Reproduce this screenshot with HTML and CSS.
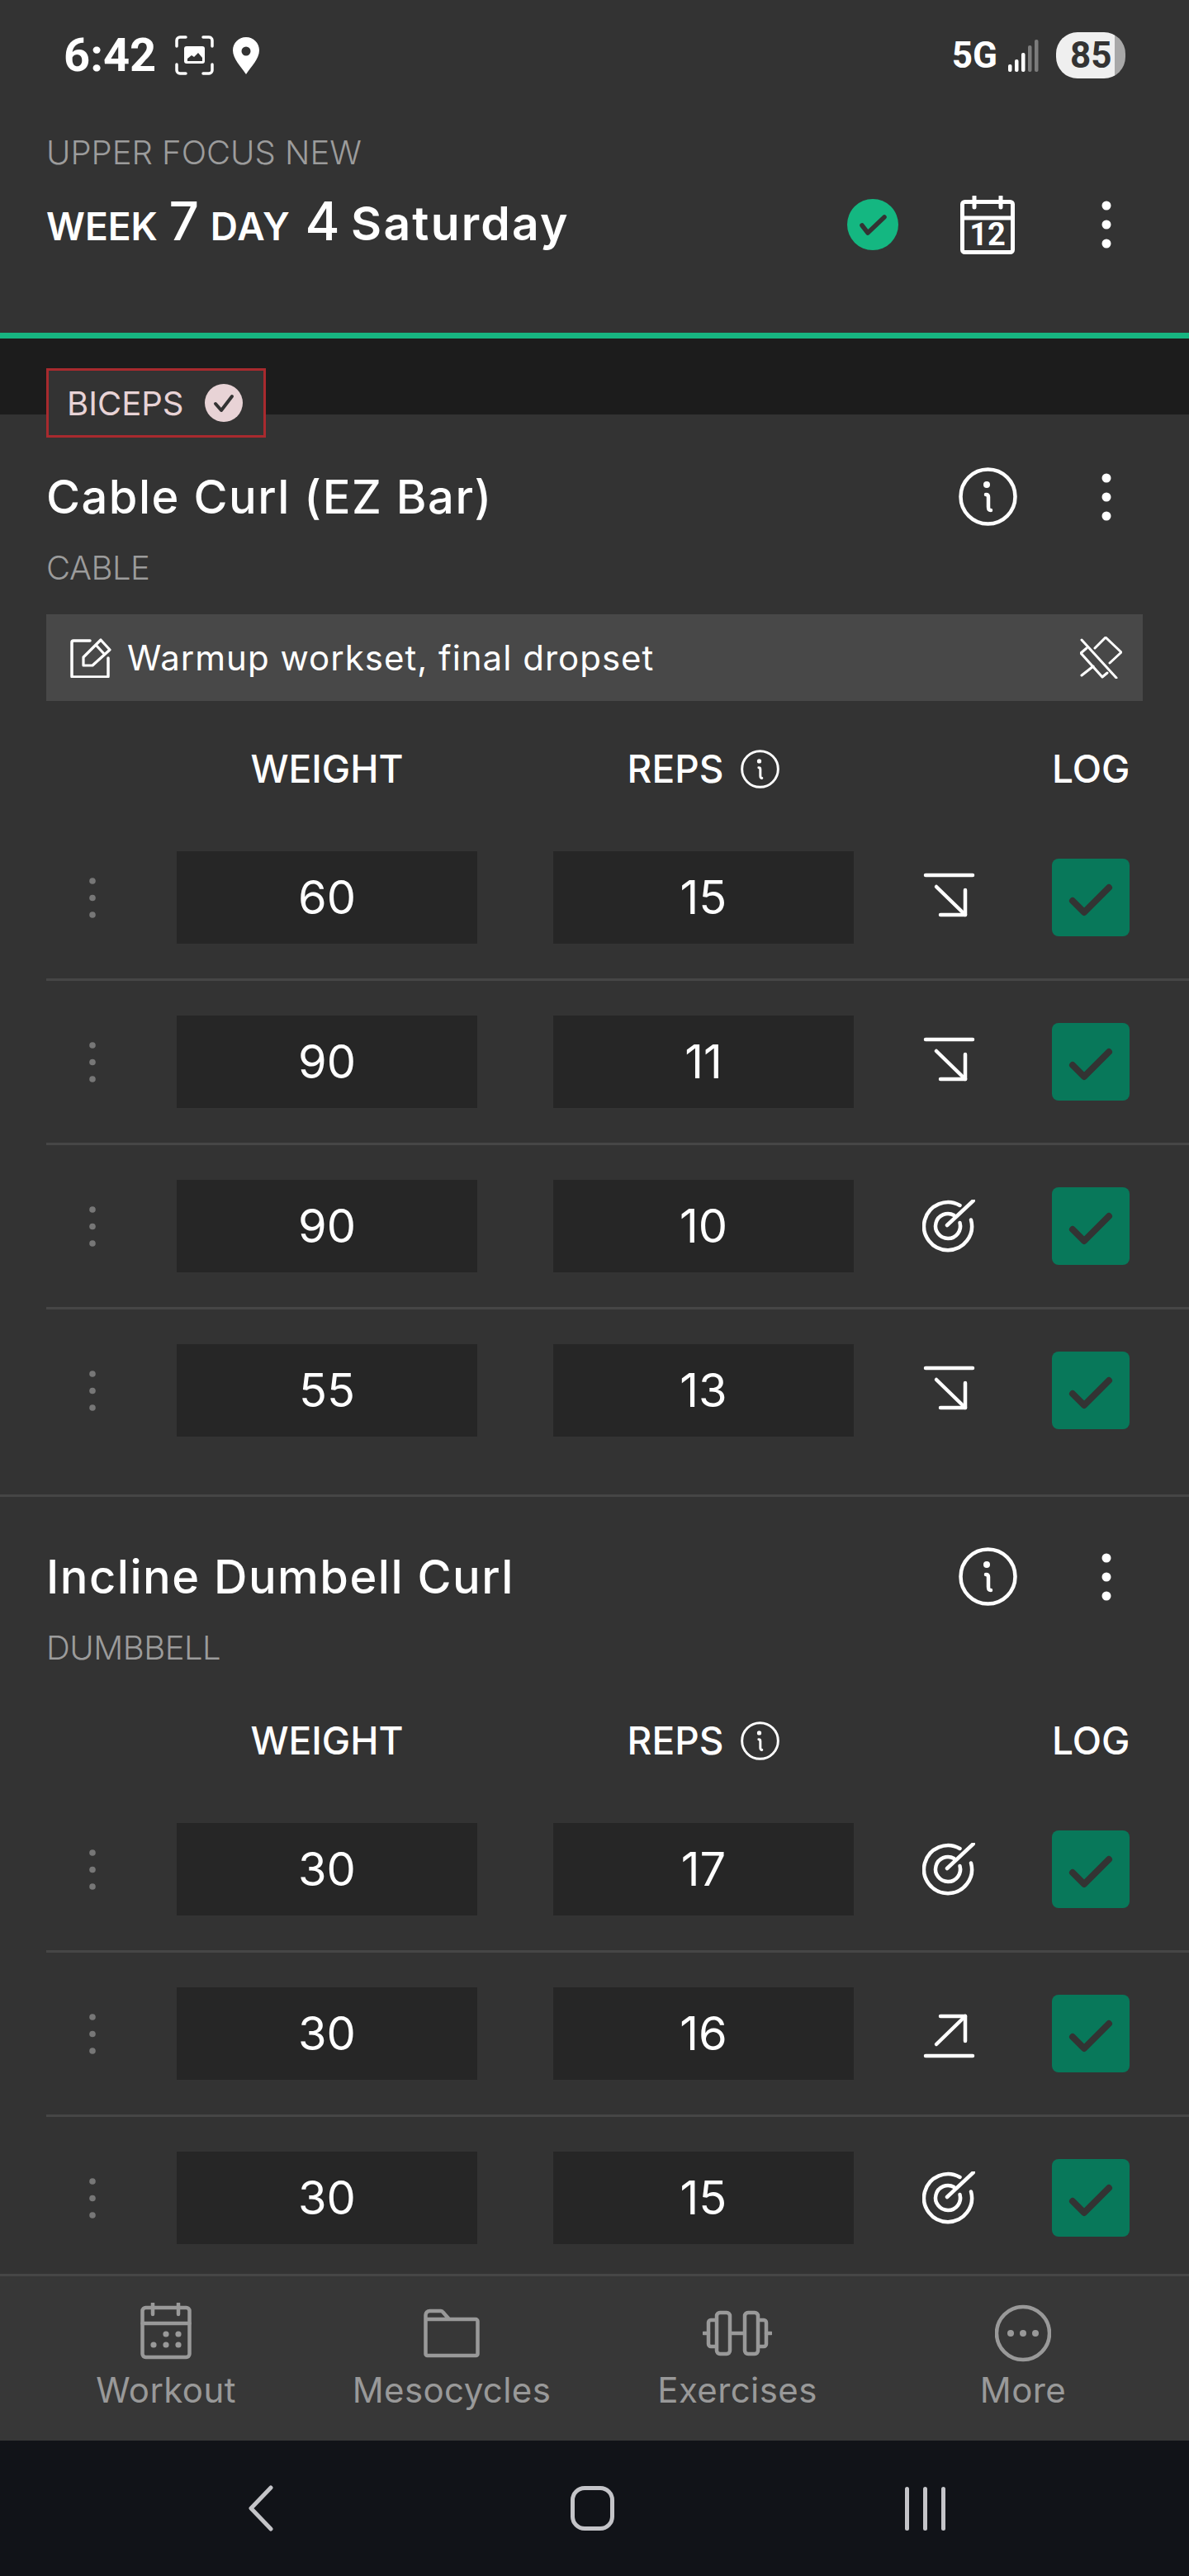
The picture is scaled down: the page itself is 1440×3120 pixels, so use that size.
FILE: index.html
```html
<!DOCTYPE html>
<html>
<head>
	<title>Workout</title>
	<link rel="stylesheet" href="styles.css">
</head>
<body>
	<svg class="defs" width="0" height="0">
		<symbol id="i-info" viewBox="0 0 71 71">
			<circle cx="35.5" cy="35.5" r="33" fill="none" stroke="currentColor" stroke-width="4.5"/>
			<circle cx="34" cy="21" r="4" fill="currentColor"/>
			<path d="M33 33c2 0 3 1 3 3v12c0 3 1 4 3 4" fill="none" stroke="currentColor" stroke-width="4.5" stroke-linecap="round"/>
		</symbol>
		<symbol id="i-kebab" viewBox="0 0 12 58">
			<circle cx="6" cy="6" r="5.5" fill="currentColor"/>
			<circle cx="6" cy="29" r="5.5" fill="currentColor"/>
			<circle cx="6" cy="52" r="5.5" fill="currentColor"/>
		</symbol>
		<symbol id="i-drag" viewBox="0 0 8 49">
			<circle cx="4" cy="4" r="3.8" fill="currentColor"/>
			<circle cx="4" cy="24.5" r="3.8" fill="currentColor"/>
			<circle cx="4" cy="45" r="3.8" fill="currentColor"/>
		</symbol>
		<symbol id="i-target" viewBox="0 0 64 64">
			<g fill="none" stroke="currentColor" stroke-width="4.5" stroke-linecap="round">
				<path d="M45.5 7A29 29 0 1 0 59 24.5"/>
				<path d="M38.5 19A15 15 0 1 0 45.5 28"/>
				<path d="M30 31L62 1"/>
			</g>
		</symbol>
		<symbol id="i-down" viewBox="0 0 64 64">
			<g fill="none" stroke="currentColor" stroke-width="4.5" stroke-linecap="round" stroke-linejoin="round">
				<path d="M4 5H61"/>
				<path d="M17 19L52 53"/>
				<path d="M52 23V53H22"/>
			</g>
		</symbol>
		<symbol id="i-up" viewBox="0 0 64 64">
			<g fill="none" stroke="currentColor" stroke-width="4.5" stroke-linecap="round" stroke-linejoin="round">
				<path d="M4 59H61"/>
				<path d="M17 45L52 11"/>
				<path d="M22 11H52V41"/>
			</g>
		</symbol>
		<symbol id="i-check" viewBox="0 0 94 94">
			<path d="M25 51L39 65L69 35" fill="none" stroke="#333" stroke-width="8" stroke-linecap="round" stroke-linejoin="round"/>
		</symbol>
	</svg>

	<div class="phone">
		<header class="top">
			<div class="status">
				<span class="clock">6:42</span>
				<svg class="ic-shot" viewBox="0 0 47 48">
					<path d="M2 13V6a4 4 0 0 1 4-4h7M34 2h7a4 4 0 0 1 4 4v7M45 35v7a4 4 0 0 1-4 4h-7M13 46H6a4 4 0 0 1-4-4v-7" fill="none" stroke="#fff" stroke-width="3.5" stroke-linecap="round"/>
					<rect x="11" y="13" width="25" height="21" rx="3" fill="#fff"/>
					<path d="M15 31v-3l5-4 3 2 5-5 5 6v4z" fill="#333"/>
				</svg>
				<svg class="ic-loc" viewBox="0 0 32 45">
					<path d="M16 0C7 0 0 7 0 16c0 10 10 20 16 29 6-9 16-19 16-29C32 7 25 0 16 0z" fill="#fff"/>
					<circle cx="16" cy="17" r="5.5" fill="#333"/>
				</svg>
				<span class="status-gap"></span>
				<span class="net">5G</span>
				<svg class="ic-signal" viewBox="0 0 37 39">
					<rect x="0" y="30" width="4.5" height="9" rx="2" fill="#fff"/>
					<rect x="8" y="24" width="4.5" height="15" rx="2" fill="#fff"/>
					<rect x="16" y="16" width="4.5" height="23" rx="2" fill="#fff"/>
					<rect x="24" y="7" width="4.5" height="32" rx="2" fill="#7c7c7c"/>
					<rect x="32" y="0" width="4.5" height="39" rx="2" fill="#7c7c7c"/>
				</svg>
				<span class="battery">85</span>
			</div>
			<div class="plan">UPPER FOCUS NEW</div>
			<div class="day-row">
				<h1 class="day"><small>WEEK</small> <b>7</b> <small class="day-label">DAY</small> <b>4</b> <span class="dow">Saturday</span></h1>
				<svg class="ic-done" viewBox="0 0 62 62">
					<circle cx="31" cy="31" r="31" fill="#14b781"/>
					<path d="M18 32L25 41L45 22" fill="none" stroke="#333" stroke-width="5.5" stroke-linecap="round" stroke-linejoin="round"/>
				</svg>
				<svg class="ic-cal" viewBox="0 0 66 71">
					<rect x="2.5" y="7.5" width="61" height="61" rx="3" fill="none" stroke="#fff" stroke-width="5"/>
					<path d="M2.5 27H63.5M17 1V14M49 1V14" stroke="#fff" stroke-width="5" stroke-linecap="round"/>
					<text class="cal-num" x="33" y="60" text-anchor="middle">12</text>
				</svg>
				<svg class="ic-kebab"><use href="#i-kebab"/></svg>
			</div>
		</header>
		<div class="progress"></div>

		<main class="scroll">
			<div class="band">
				<div class="chip">
					<span>BICEPS</span>
					<svg class="ic-chip" viewBox="0 0 46 46">
						<circle cx="23" cy="23" r="23" fill="#e8d3d6"/>
						<path d="M13 24L20 32L33 15" fill="none" stroke="#333" stroke-width="4" stroke-linecap="round" stroke-linejoin="round"/>
					</svg>
				</div>
			</div>

			<section class="exercise first">
				<div class="ex-head">
					<h2>Cable Curl (EZ Bar)</h2>
					<svg class="ic-info"><use href="#i-info"/></svg>
					<svg class="ic-kebab"><use href="#i-kebab"/></svg>
				</div>
				<div class="ex-kind">CABLE</div>
				<div class="note">
					<svg class="ic-edit" viewBox="0 0 50 48">
						<path d="M24 3H4a2 2 0 0 0-2 2v41a1 1 0 0 0 1 1h42a1 1 0 0 0 1-1V24" fill="none" stroke="#fff" stroke-width="3.5" stroke-linecap="round"/>
						<path d="M16 33V23L37 2l11 12-21 19zM31 8l11 12" fill="none" stroke="#fff" stroke-width="3.2" stroke-linejoin="round"/>
					</svg>
					<span class="note-text">Warmup workset, final dropset</span>
					<svg class="ic-pin" viewBox="0 0 51 51">
						<g fill="none" stroke="#fff" stroke-width="3" stroke-linecap="round" stroke-linejoin="round">
							<path d="M2 4L44 50"/>
							<path d="M18 14L31 1L50 19L36 32"/>
							<path d="M8 14L1 20L27 49L33 44"/>
							<path d="M16 36L2 47"/>
						</g>
					</svg>
				</div>
				<div class="sets-head">
					<span class="c-weight">WEIGHT</span>
					<span class="c-reps">REPS <svg class="ic-info-sm"><use href="#i-info"/></svg></span>
					<span class="c-log">LOG</span>
				</div>
				<div class="set">
					<svg class="ic-drag"><use href="#i-drag"/></svg>
					<div class="val c-weight">60</div>
					<div class="val c-reps">15</div>
					<svg class="ic-trend"><use href="#i-down"/></svg>
					<svg class="ic-log"><use href="#i-check"/></svg>
				</div>
				<div class="set">
					<svg class="ic-drag"><use href="#i-drag"/></svg>
					<div class="val c-weight">90</div>
					<div class="val c-reps">11</div>
					<svg class="ic-trend"><use href="#i-down"/></svg>
					<svg class="ic-log"><use href="#i-check"/></svg>
				</div>
				<div class="set">
					<svg class="ic-drag"><use href="#i-drag"/></svg>
					<div class="val c-weight">90</div>
					<div class="val c-reps">10</div>
					<svg class="ic-trend"><use href="#i-target"/></svg>
					<svg class="ic-log"><use href="#i-check"/></svg>
				</div>
				<div class="set last">
					<svg class="ic-drag"><use href="#i-drag"/></svg>
					<div class="val c-weight">55</div>
					<div class="val c-reps">13</div>
					<svg class="ic-trend"><use href="#i-down"/></svg>
					<svg class="ic-log"><use href="#i-check"/></svg>
				</div>
			</section>

			<section class="exercise">
				<div class="ex-head">
					<h2>Incline Dumbell Curl</h2>
					<svg class="ic-info"><use href="#i-info"/></svg>
					<svg class="ic-kebab"><use href="#i-kebab"/></svg>
				</div>
				<div class="ex-kind">DUMBBELL</div>
				<div class="sets-head no-note">
					<span class="c-weight">WEIGHT</span>
					<span class="c-reps">REPS <svg class="ic-info-sm"><use href="#i-info"/></svg></span>
					<span class="c-log">LOG</span>
				</div>
				<div class="set">
					<svg class="ic-drag"><use href="#i-drag"/></svg>
					<div class="val c-weight">30</div>
					<div class="val c-reps">17</div>
					<svg class="ic-trend"><use href="#i-target"/></svg>
					<svg class="ic-log"><use href="#i-check"/></svg>
				</div>
				<div class="set">
					<svg class="ic-drag"><use href="#i-drag"/></svg>
					<div class="val c-weight">30</div>
					<div class="val c-reps">16</div>
					<svg class="ic-trend"><use href="#i-up"/></svg>
					<svg class="ic-log"><use href="#i-check"/></svg>
				</div>
				<div class="set">
					<svg class="ic-drag"><use href="#i-drag"/></svg>
					<div class="val c-weight">30</div>
					<div class="val c-reps">15</div>
					<svg class="ic-trend"><use href="#i-target"/></svg>
					<svg class="ic-log"><use href="#i-check"/></svg>
				</div>
			</section>
		</main>

		<nav class="tabs">
			<a class="tab">
				<svg class="tab-ic" viewBox="0 0 62 72">
					<rect x="2.5" y="6" width="57" height="60" rx="4" fill="none" stroke="currentColor" stroke-width="4.5"/>
					<path d="M2.5 25H59.5M15 1V14M46 1V14" stroke="currentColor" stroke-width="4.5" stroke-linecap="round"/>
					<g fill="currentColor">
						<circle cx="31" cy="38" r="3.6"/><circle cx="46" cy="38" r="3.6"/>
						<circle cx="16" cy="51" r="3.6"/><circle cx="31" cy="51" r="3.6"/><circle cx="46" cy="51" r="3.6"/>
					</g>
				</svg>
				<span>Workout</span>
			</a>
			<a class="tab">
				<svg class="tab-ic" viewBox="0 -8 68 72">
					<path d="M2.5 7a5 5 0 0 1 5-5H21a3 3 0 0 1 2.5 1.5L31 12H63a2.5 2.5 0 0 1 2.5 2.5V54a2 2 0 0 1-2 2H4.5a2 2 0 0 1-2-2zM2.5 12H31" fill="none" stroke="currentColor" stroke-width="4.5" stroke-linejoin="round"/>
				</svg>
				<span>Mesocycles</span>
			</a>
			<a class="tab">
				<svg class="tab-ic" viewBox="0 -3 84 72">
					<g fill="none" stroke="currentColor" stroke-width="4.5" stroke-linejoin="round">
						<rect x="17" y="9" width="16" height="50" rx="4"/>
						<rect x="51" y="9" width="16" height="50" rx="4"/>
						<path d="M17 18H10a3 3 0 0 0-3 3V47a3 3 0 0 0 3 3h7M67 18h7a3 3 0 0 1 3 3V47a3 3 0 0 1-3 3h-7M33 34H51"/>
						<path d="M1 34H7M77 34H83" stroke-linecap="round"/>
					</g>
				</svg>
				<span>Exercises</span>
			</a>
			<a class="tab">
				<svg class="tab-ic" viewBox="0 -3 68 72">
					<circle cx="34" cy="34" r="32" fill="none" stroke="currentColor" stroke-width="4.5"/>
					<circle cx="19" cy="34" r="4" fill="currentColor"/>
					<circle cx="34" cy="34" r="4" fill="currentColor"/>
					<circle cx="49" cy="34" r="4" fill="currentColor"/>
				</svg>
				<span>More</span>
			</a>
		</nav>

		<div class="sysbar">
			<svg class="sys-back" viewBox="0 0 30 56"><path d="M27 3L3 28L27 53" fill="none" stroke="#c4c4c8" stroke-width="5" stroke-linecap="round" stroke-linejoin="round"/></svg>
			<div class="sys-home"></div>
			<div class="sys-recent"><i></i><i></i><i></i></div>
		</div>
	</div>
</body>
</html>
```

FILE: styles.css
```css
* {
	box-sizing: border-box;
}
body {
	margin: 0;
	background: #333;
}
.defs {
	position: absolute;
}
.phone {
	display: flex;
	flex-direction: column;
	width: 1440px;
	height: 3120px;
	overflow: hidden;
	background: #333;
	color: #fff;
	font-family: Inter, "Noto Sans", sans-serif;
}

/* top bar */
.top {
	height: 403px;
	padding: 39px 0 0 56px;
}
.status {
	display: flex;
	align-items: center;
	height: 56px;
	padding: 0 77px 0 21px;
}
.clock {
	font-family: Roboto, sans-serif;
	font-size: 56px;
	font-weight: 700;
	width: 135px;
}
.ic-shot {
	width: 47px;
	height: 48px;
}
.ic-loc {
	width: 32px;
	height: 45px;
	margin-left: 23px;
}
.status-gap {
	flex: 1;
}
.net {
	font-family: Roboto, sans-serif;
	font-size: 44px;
	font-weight: 700;
}
.ic-signal {
	width: 37px;
	height: 39px;
	margin-left: 13px;
}
.battery {
	width: 84px;
	height: 56px;
	margin-left: 21px;
	padding-left: 17px;
	border-radius: 26px;
	background: linear-gradient(90deg, #efefef 85%, #a8a8a8 85%);
	color: #333;
	font-family: Roboto, sans-serif;
	font-size: 44px;
	font-weight: 700;
	line-height: 56px;
}
.plan {
	margin-top: 65px;
	color: #9c9c9c;
	font-size: 40px;
	font-weight: 300;
	line-height: 50px;
}
.day-row {
	display: flex;
	align-items: center;
	height: 72px;
	margin-top: 26px;
	padding-right: 94px;
}
.day {
	flex: 1;
	margin: 0;
	padding-bottom: 10px;
	font-size: 54px;
	font-weight: 600;
	white-space: nowrap;
}
.day small {
	font-size: 46px;
}
.day .day-label {
	margin-right: 4px;
	letter-spacing: 1px;
}
.day b {
	font-size: 64px;
	font-weight: 500;
}
.dow {
	font-size: 57px;
	letter-spacing: 2.2px;
}
.ic-done {
	width: 62px;
	height: 62px;
	margin-right: 75px;
}
.ic-cal {
	width: 66px;
	height: 71px;
	margin-right: 105px;
}
.cal-num {
	fill: #fff;
	font-family: Roboto, sans-serif;
	font-size: 38px;
	font-weight: 700;
}
.ic-kebab {
	width: 12px;
	height: 58px;
}
.progress {
	height: 7px;
	background: #17b581;
}

/* scrolling list */
.scroll {
	flex: 1;
	overflow: hidden;
}
.band {
	height: 92px;
	padding: 36px 0 0 56px;
	background: #1c1c1c;
}
.chip {
	display: flex;
	align-items: center;
	justify-content: space-between;
	width: 266px;
	height: 84px;
	padding: 0 25px 0 22px;
	border: 3px solid #a82a2e;
	background: #333;
	color: #e8d3d6;
	font-size: 40px;
}
.ic-chip {
	width: 46px;
	height: 46px;
}
.exercise {
	padding: 61px 0 0 56px;
	border-top: 3px solid #464646;
	margin-top: 28px;
}
.exercise.first {
	padding-top: 64px;
	border-top: 0;
	margin-top: 0;
}
.ex-head {
	display: flex;
	align-items: center;
	height: 71px;
	padding-right: 94px;
}
.ex-head h2 {
	flex: 1;
	margin: 0;
	font-size: 56px;
	font-weight: 500;
	letter-spacing: 1.5px;
}
.ic-info {
	width: 71px;
	height: 71px;
	margin-right: 102px;
}
.ex-kind {
	margin-top: 26px;
	color: #9c9c9c;
	font-size: 40px;
	font-weight: 300;
	letter-spacing: -0.5px;
	line-height: 50px;
}
.note {
	display: flex;
	align-items: center;
	width: 1328px;
	height: 105px;
	margin-top: 31px;
	padding: 0 25px 0 29px;
	background: #484848;
}
.ic-edit {
	width: 50px;
	height: 48px;
}
.note-text {
	flex: 1;
	margin-left: 19px;
	font-size: 42px;
	letter-spacing: 1px;
}
.ic-pin {
	width: 51px;
	height: 51px;
}

/* sets table */
.sets-head {
	display: grid;
	grid-template-columns: 158px 364px 92px 364px 240px 94px;
	align-items: center;
	height: 60px;
	margin-top: 52px;
	margin-bottom: 28px;
	font-size: 46px;
	font-weight: 500;
}
.sets-head.no-note {
	margin-top: 57px;
}
.sets-head .c-weight {
	grid-column: 2;
	text-align: center;
}
.sets-head .c-reps {
	display: flex;
	align-items: center;
	justify-content: center;
	grid-column: 4;
	gap: 21px;
}
.sets-head .c-log {
	grid-column: 6;
	text-align: center;
}
.ic-info-sm {
	width: 47px;
	height: 47px;
}
.set {
	display: grid;
	grid-template-columns: 158px 364px 92px 364px 240px 94px;
	align-items: center;
	height: 199px;
	border-bottom: 3px solid #464646;
}
.set.last {
	border-bottom: 0;
	height: 196px;
}
.ic-drag {
	width: 8px;
	height: 49px;
	margin-left: 52px;
	color: #777;
}
.val {
	height: 112px;
	background: #262626;
	font-size: 56px;
	line-height: 112px;
	text-align: center;
}
.set .c-weight {
	grid-column: 2;
}
.set .c-reps {
	grid-column: 4;
}
.ic-trend {
	grid-column: 5;
	width: 64px;
	height: 64px;
	margin-left: 83px;
}
.ic-log {
	width: 94px;
	height: 94px;
	border-radius: 8px;
	background: #08785a;
}

/* bottom tabs */
.tabs {
	display: grid;
	grid-template-columns: repeat(4, 346px);
	height: 202px;
	padding: 32px 0 0 28px;
	border-top: 3px solid #464646;
	background: #373737;
}
.tab {
	display: flex;
	flex-direction: column;
	align-items: center;
	color: #999;
	font-size: 42px;
	letter-spacing: 0.4px;
}
.tab-ic {
	height: 72px;
	margin-bottom: 8px;
}
.sysbar {
	display: flex;
	align-items: center;
	height: 164px;
	padding-left: 301px;
	background: #111318;
}
.sys-back {
	width: 30px;
	height: 56px;
}
.sys-home {
	width: 53px;
	height: 54px;
	margin-left: 360px;
	border: 5px solid #c4c4c8;
	border-radius: 17px;
}
.sys-recent {
	display: flex;
	gap: 17px;
	margin-left: 352px;
}
.sys-recent i {
	width: 5px;
	height: 53px;
	border-radius: 3px;
	background: #c4c4c8;
}
```
